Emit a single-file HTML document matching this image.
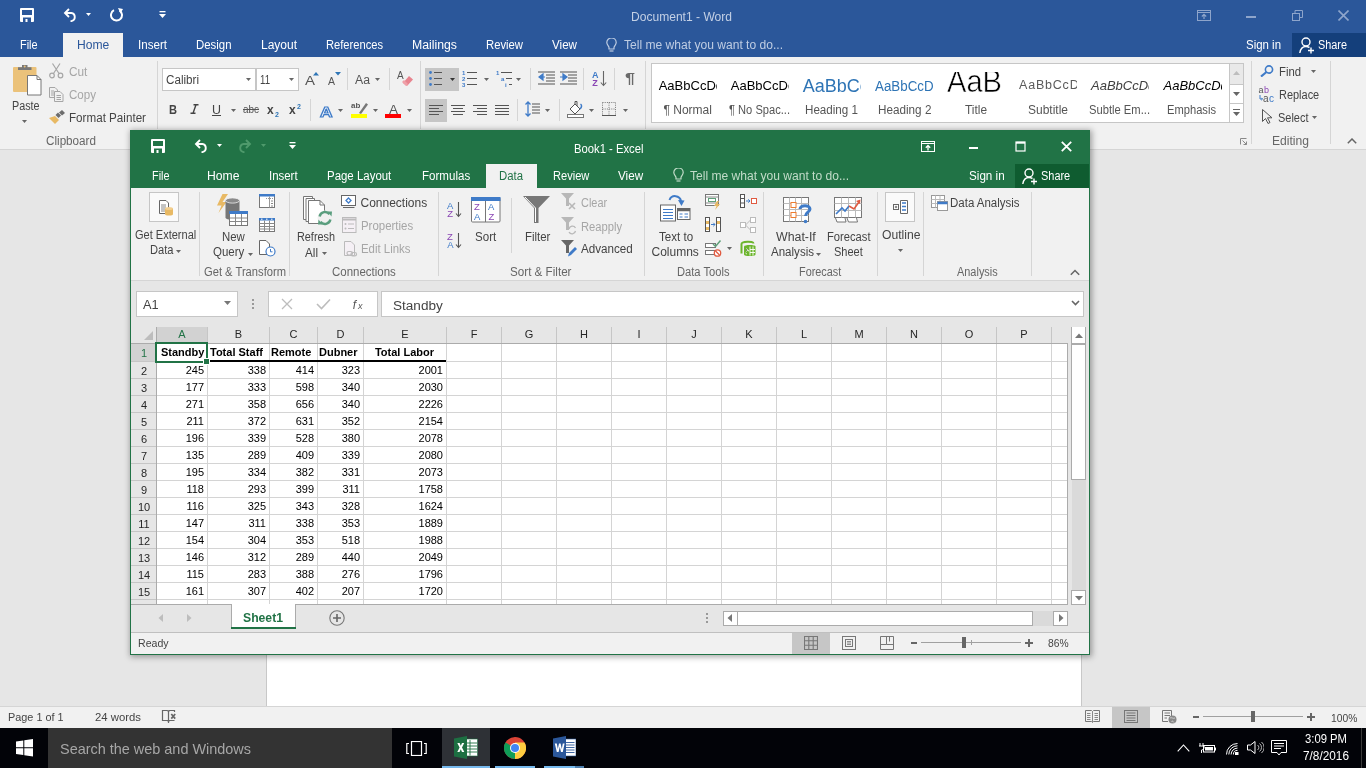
<!DOCTYPE html>
<html><head><meta charset="utf-8"><style>
html,body{margin:0;padding:0;width:1366px;height:768px;overflow:hidden;background:#E6E6E6;}
body{position:relative;font-family:"Liberation Sans",sans-serif;}
.r{position:absolute;display:block;}
.t{position:absolute;white-space:nowrap;line-height:1;transform-origin:0 0;}
</style></head><body>
<div id="w" style="position:absolute;left:0;top:0;width:1366px;height:768px;will-change:transform;">
<div class="r" style="left:0px;top:0px;width:1366px;height:57px;background:#2B579A;"></div>
<div class="r" style="left:0px;top:57px;width:1366px;height:92px;background:#F1F1F1;"></div>
<div class="r" style="left:0px;top:149px;width:1366px;height:1px;background:#D5D5D5;"></div>
<div class="r" style="left:0px;top:150px;width:1366px;height:556px;background:#E6E6E6;"></div>
<div class="r" style="left:266px;top:150px;width:816px;height:556px;background:#FFFFFF;border-left:1px solid #C8C8C8;border-right:1px solid #C8C8C8;box-sizing:border-box;"></div>
<div class="r" style="left:0px;top:706px;width:1366px;height:1px;background:#D5D5D5;"></div>
<div class="r" style="left:0px;top:707px;width:1366px;height:21px;background:#F1F1F1;"></div>
<div class="t" style="left:631.00px;top:11.34px;font-size:12px;color:#C3D0E5;transform:scaleX(1.0051);">Document1 - Word</div>
<div class="r" style="left:63px;top:33px;width:60px;height:24px;background:#F1F1F1;"></div>
<div class="t" style="left:20.40px;top:39.34px;font-size:12px;color:#FFFFFF;transform:scaleX(0.9102);">File</div>
<div class="t" style="left:76.70px;top:39.34px;font-size:12px;color:#2B579A;transform:scaleX(1.0090);">Home</div>
<div class="t" style="left:138.00px;top:39.34px;font-size:12px;color:#FFFFFF;transform:scaleX(0.9663);">Insert</div>
<div class="t" style="left:196.00px;top:39.34px;font-size:12px;color:#FFFFFF;transform:scaleX(0.9503);">Design</div>
<div class="t" style="left:261.00px;top:39.34px;font-size:12px;color:#FFFFFF;">Layout</div>
<div class="t" style="left:326.00px;top:39.34px;font-size:12px;color:#FFFFFF;transform:scaleX(0.9288);">References</div>
<div class="t" style="left:412.00px;top:39.34px;font-size:12px;color:#FFFFFF;transform:scaleX(1.0223);">Mailings</div>
<div class="t" style="left:486.00px;top:39.34px;font-size:12px;color:#FFFFFF;transform:scaleX(0.9404);">Review</div>
<div class="t" style="left:552.00px;top:39.34px;font-size:12px;color:#FFFFFF;transform:scaleX(0.9692);">View</div>
<div class="t" style="left:624.00px;top:39.34px;font-size:12px;color:#BFCDE3;transform:scaleX(1.0058);">Tell me what you want to do...</div>
<div class="t" style="left:1246.00px;top:39.34px;font-size:12px;color:#FFFFFF;transform:scaleX(0.9539);">Sign in</div>
<div class="r" style="left:1292px;top:33px;width:74px;height:24px;background:#143F7B;"></div>
<div class="t" style="left:1318.00px;top:39.34px;font-size:12px;color:#FFFFFF;transform:scaleX(0.9056);">Share</div>
<div class="t" style="left:45.50px;top:135.34px;font-size:12px;color:#666666;transform:scaleX(0.9734);">Clipboard</div>
<div class="t" style="left:1272.00px;top:135.14px;font-size:12px;color:#666666;transform:scaleX(1.0084);">Editing</div>
<div class="r" style="left:157px;top:61px;width:1px;height:68px;background:#D5D5D5;"></div>
<div class="r" style="left:420px;top:61px;width:1px;height:68px;background:#D5D5D5;"></div>
<div class="r" style="left:645px;top:61px;width:1px;height:68px;background:#D5D5D5;"></div>
<div class="r" style="left:1251px;top:61px;width:1px;height:83px;background:#D5D5D5;"></div>
<div class="r" style="left:1330px;top:61px;width:1px;height:83px;background:#D5D5D5;"></div>
<div class="t" style="left:11.60px;top:100.34px;font-size:12px;color:#444444;transform:scaleX(0.8994);">Paste</div>
<div class="t" style="left:68.50px;top:65.94px;font-size:12px;color:#A6A6A6;transform:scaleX(0.9853);">Cut</div>
<div class="t" style="left:68.50px;top:89.14px;font-size:12px;color:#A6A6A6;transform:scaleX(0.9638);">Copy</div>
<div class="t" style="left:68.50px;top:111.84px;font-size:12px;color:#444444;transform:scaleX(0.9702);">Format Painter</div>
<div class="r" style="left:162px;top:68px;width:94px;height:23px;background:#FFFFFF;border:1px solid #C6C6C6;box-sizing:border-box;"></div>
<div class="r" style="left:256px;top:68px;width:43px;height:23px;background:#FFFFFF;border:1px solid #C6C6C6;box-sizing:border-box;"></div>
<div class="t" style="left:165.80px;top:74.34px;font-size:12px;color:#444444;transform:scaleX(0.9703);">Calibri</div>
<div class="t" style="left:259.60px;top:74.34px;font-size:12px;color:#444444;transform:scaleX(0.8027);">11</div>
<div class="r" style="left:425px;top:68px;width:34px;height:23px;background:#C6C6C6;"></div>
<div class="r" style="left:425px;top:99px;width:22px;height:23px;background:#C6C6C6;"></div>
<div class="r" style="left:347px;top:68px;width:1px;height:22px;background:#D5D5D5;"></div>
<div class="r" style="left:389px;top:68px;width:1px;height:22px;background:#D5D5D5;"></div>
<div class="r" style="left:310px;top:99px;width:1px;height:22px;background:#D5D5D5;"></div>
<div class="r" style="left:530px;top:68px;width:1px;height:22px;background:#D5D5D5;"></div>
<div class="r" style="left:517px;top:99px;width:1px;height:22px;background:#D5D5D5;"></div>
<div class="r" style="left:559px;top:99px;width:1px;height:22px;background:#D5D5D5;"></div>
<div class="r" style="left:614px;top:68px;width:1px;height:22px;background:#D5D5D5;"></div>
<div class="r" style="left:583px;top:68px;width:1px;height:22px;background:#D5D5D5;"></div>
<div class="r" style="left:651px;top:63px;width:579px;height:60px;background:#FFFFFF;border:1px solid #C6C6C6;box-sizing:border-box;"></div>
<div class="r" style="left:1229px;top:63px;width:15px;height:60px;background:#FFFFFF;border:1px solid #C6C6C6;box-sizing:border-box;"></div>
<div class="r" style="left:1230px;top:64px;width:13px;height:20px;background:#E9E9E9;"></div>
<div class="r" style="left:1229px;top:84px;width:15px;height:1px;background:#C6C6C6;"></div>
<div class="r" style="left:1229px;top:103px;width:15px;height:1px;background:#C6C6C6;"></div>
<div class="t" style="left:7.60px;top:712.19px;font-size:11px;color:#444444;transform:scaleX(0.9881);">Page 1 of 1</div>
<div class="t" style="left:95.20px;top:712.19px;font-size:11px;color:#444444;transform:scaleX(1.0306);">24 words</div>
<div class="r" style="left:1112px;top:707px;width:38px;height:21px;background:#C6C6C6;"></div>
<div class="t" style="left:1330.50px;top:712.59px;font-size:11px;color:#444444;transform:scaleX(0.9348);">100%</div>
<div class="r" style="left:1203px;top:716px;width:100px;height:1px;background:#A0A0A0;"></div>
<div class="r" style="left:1251px;top:711px;width:4px;height:11px;background:#666666;"></div>
<div class="r" style="left:1193px;top:716px;width:6px;height:2px;background:#666666;"></div>
<div class="r" style="left:1307px;top:716px;width:8px;height:2px;background:#666666;"></div>
<div class="r" style="left:1310px;top:713px;width:2px;height:8px;background:#666666;"></div>
<div class="r" style="left:0px;top:728px;width:1366px;height:40px;background:#020308;"></div>
<div class="r" style="left:48px;top:728px;width:344px;height:40px;background:#333333;"></div>
<div class="t" style="left:60.30px;top:741.20px;font-size:15px;color:#A7A7A7;transform:scaleX(0.9625);">Search the web and Windows</div>
<div class="r" style="left:442px;top:728px;width:48px;height:40px;background:#2E3136;"></div>
<div class="r" style="left:442px;top:766px;width:48px;height:2px;background:#76B9ED;"></div>
<div class="r" style="left:495px;top:766px;width:40px;height:2px;background:#76B9ED;"></div>
<div class="r" style="left:544px;top:766px;width:40px;height:2px;background:#76B9ED;"></div>
<div class="t" style="left:1305.00px;top:733.14px;font-size:12px;color:#FFFFFF;transform:scaleX(0.9398);">3:09 PM</div>
<div class="t" style="left:1303.00px;top:750.34px;font-size:12px;color:#FFFFFF;transform:scaleX(0.9848);">7/8/2016</div>
<div class="r" style="left:1361px;top:728px;width:1px;height:40px;background:#3A3A3A;"></div>
<div class="r" style="left:130px;top:130px;width:960px;height:525px;box-shadow:1px 1px 6px 1px rgba(0,0,0,0.34);"></div>
<div class="r" style="left:130px;top:130px;width:960px;height:525px;background:#217346;"></div>
<div class="r" style="left:131px;top:188px;width:958px;height:92px;background:#F1F1F1;"></div>
<div class="r" style="left:131px;top:280px;width:958px;height:1px;background:#D5D5D5;"></div>
<div class="r" style="left:131px;top:281px;width:958px;height:46px;background:#E6E6E6;"></div>
<div class="t" style="left:574.30px;top:143.34px;font-size:12px;color:#FFFFFF;transform:scaleX(0.9374);">Book1 - Excel</div>
<div class="r" style="left:486px;top:164px;width:51px;height:24px;background:#F1F1F1;"></div>
<div class="t" style="left:151.70px;top:169.84px;font-size:12px;color:#FFFFFF;transform:scaleX(0.9050);">File</div>
<div class="t" style="left:207.30px;top:169.84px;font-size:12px;color:#FFFFFF;transform:scaleX(1.0153);">Home</div>
<div class="t" style="left:269.00px;top:169.84px;font-size:12px;color:#FFFFFF;transform:scaleX(0.9529);">Insert</div>
<div class="t" style="left:327.40px;top:169.84px;font-size:12px;color:#FFFFFF;transform:scaleX(0.9541);">Page Layout</div>
<div class="t" style="left:421.50px;top:169.84px;font-size:12px;color:#FFFFFF;transform:scaleX(0.9638);">Formulas</div>
<div class="t" style="left:499.00px;top:169.84px;font-size:12px;color:#217346;transform:scaleX(0.9468);">Data</div>
<div class="t" style="left:552.50px;top:169.84px;font-size:12px;color:#FFFFFF;transform:scaleX(0.9226);">Review</div>
<div class="t" style="left:617.80px;top:169.84px;font-size:12px;color:#FFFFFF;transform:scaleX(0.9731);">View</div>
<div class="t" style="left:689.60px;top:169.84px;font-size:12px;color:#C2DCC9;transform:scaleX(1.0058);">Tell me what you want to do...</div>
<div class="t" style="left:969.00px;top:169.84px;font-size:12px;color:#FFFFFF;transform:scaleX(0.9729);">Sign in</div>
<div class="r" style="left:1015px;top:164px;width:74px;height:24px;background:#0F5C30;"></div>
<div class="t" style="left:1040.80px;top:169.84px;font-size:12px;color:#FFFFFF;transform:scaleX(0.9118);">Share</div>
<div class="t" style="left:134.60px;top:228.74px;font-size:12px;color:#444444;transform:scaleX(0.9176);">Get External</div>
<div class="t" style="left:149.50px;top:244.34px;font-size:12px;color:#444444;transform:scaleX(0.9271);">Data</div>
<div class="t" style="left:221.80px;top:230.64px;font-size:12px;color:#444444;transform:scaleX(0.9497);">New</div>
<div class="t" style="left:213.30px;top:246.34px;font-size:12px;color:#444444;transform:scaleX(0.9578);">Query</div>
<div class="t" style="left:296.50px;top:230.64px;font-size:12px;color:#444444;transform:scaleX(0.9044);">Refresh</div>
<div class="t" style="left:305.00px;top:246.74px;font-size:12px;color:#444444;transform:scaleX(0.9747);">All</div>
<div class="t" style="left:360.50px;top:196.84px;font-size:12px;color:#444444;">Connections</div>
<div class="t" style="left:360.50px;top:219.64px;font-size:12px;color:#A6A6A6;transform:scaleX(0.9526);">Properties</div>
<div class="t" style="left:360.50px;top:243.04px;font-size:12px;color:#A6A6A6;transform:scaleX(0.9514);">Edit Links</div>
<div class="t" style="left:474.80px;top:231.04px;font-size:12px;color:#444444;transform:scaleX(0.9633);">Sort</div>
<div class="t" style="left:524.60px;top:231.04px;font-size:12px;color:#444444;transform:scaleX(0.9525);">Filter</div>
<div class="t" style="left:580.60px;top:197.34px;font-size:12px;color:#A6A6A6;transform:scaleX(0.9101);">Clear</div>
<div class="t" style="left:580.60px;top:220.64px;font-size:12px;color:#A6A6A6;transform:scaleX(0.9335);">Reapply</div>
<div class="t" style="left:580.60px;top:243.04px;font-size:12px;color:#444444;transform:scaleX(0.9705);">Advanced</div>
<div class="t" style="left:658.50px;top:231.04px;font-size:12px;color:#444444;transform:scaleX(0.9647);">Text to</div>
<div class="t" style="left:651.50px;top:246.34px;font-size:12px;color:#444444;">Columns</div>
<div class="t" style="left:776.20px;top:231.04px;font-size:12px;color:#444444;transform:scaleX(1.0292);">What-If</div>
<div class="t" style="left:770.50px;top:246.34px;font-size:12px;color:#444444;transform:scaleX(0.9623);">Analysis</div>
<div class="t" style="left:826.50px;top:231.04px;font-size:12px;color:#444444;transform:scaleX(0.9318);">Forecast</div>
<div class="t" style="left:834.00px;top:246.34px;font-size:12px;color:#444444;transform:scaleX(0.9184);">Sheet</div>
<div class="t" style="left:881.50px;top:229.34px;font-size:12px;color:#444444;transform:scaleX(1.0126);">Outline</div>
<div class="t" style="left:950.40px;top:197.34px;font-size:12px;color:#444444;transform:scaleX(0.9573);">Data Analysis</div>
<div class="t" style="left:203.60px;top:265.84px;font-size:12px;color:#666666;transform:scaleX(0.9315);">Get &amp; Transform</div>
<div class="t" style="left:331.60px;top:265.84px;font-size:12px;color:#666666;transform:scaleX(0.9564);">Connections</div>
<div class="t" style="left:510.40px;top:265.84px;font-size:12px;color:#666666;transform:scaleX(0.9708);">Sort &amp; Filter</div>
<div class="t" style="left:677.00px;top:265.84px;font-size:12px;color:#666666;transform:scaleX(0.9295);">Data Tools</div>
<div class="t" style="left:799.30px;top:265.84px;font-size:12px;color:#666666;transform:scaleX(0.9061);">Forecast</div>
<div class="t" style="left:957.00px;top:265.84px;font-size:12px;color:#666666;transform:scaleX(0.9108);">Analysis</div>
<div class="r" style="left:199px;top:192px;width:1px;height:84px;background:#D5D5D5;"></div>
<div class="r" style="left:289px;top:192px;width:1px;height:84px;background:#D5D5D5;"></div>
<div class="r" style="left:438px;top:192px;width:1px;height:84px;background:#D5D5D5;"></div>
<div class="r" style="left:644px;top:192px;width:1px;height:84px;background:#D5D5D5;"></div>
<div class="r" style="left:763px;top:192px;width:1px;height:84px;background:#D5D5D5;"></div>
<div class="r" style="left:877px;top:192px;width:1px;height:84px;background:#D5D5D5;"></div>
<div class="r" style="left:923px;top:192px;width:1px;height:84px;background:#D5D5D5;"></div>
<div class="r" style="left:1031px;top:192px;width:1px;height:84px;background:#D5D5D5;"></div>
<div class="r" style="left:511px;top:198px;width:1px;height:55px;background:#D5D5D5;"></div>
<div class="r" style="left:136px;top:291px;width:102px;height:26px;background:#FFFFFF;border:1px solid #C6C6C6;box-sizing:border-box;"></div>
<div class="t" style="left:143.00px;top:298.94px;font-size:12px;color:#444444;transform:scaleX(1.0628);">A1</div>
<div class="r" style="left:268px;top:291px;width:110px;height:26px;background:#FFFFFF;border:1px solid #C6C6C6;box-sizing:border-box;"></div>
<div class="r" style="left:381px;top:291px;width:703px;height:26px;background:#FFFFFF;border:1px solid #C6C6C6;box-sizing:border-box;"></div>
<div class="t" style="left:392.50px;top:300.34px;font-size:12px;color:#444444;transform:scaleX(1.1309);">Standby</div>
<div class="r" style="left:131px;top:327px;width:937px;height:17px;background:#E6E6E6;"></div>
<div class="r" style="left:131px;top:344px;width:26px;height:260px;background:#E6E6E6;"></div>
<div class="r" style="left:156px;top:327px;width:51px;height:17px;background:#D2D2D2;"></div>
<div class="r" style="left:131px;top:344px;width:25px;height:17px;background:#D2D2D2;"></div>
<div class="r" style="left:157px;top:344px;width:910px;height:260px;background:#FFFFFF;"></div>
<div class="r" style="left:207px;top:344px;width:1px;height:260px;background:#D4D4D4;"></div>
<div class="r" style="left:207px;top:327px;width:1px;height:17px;background:#C6C6C6;"></div>
<div class="r" style="left:269px;top:344px;width:1px;height:260px;background:#D4D4D4;"></div>
<div class="r" style="left:269px;top:327px;width:1px;height:17px;background:#C6C6C6;"></div>
<div class="r" style="left:317px;top:344px;width:1px;height:260px;background:#D4D4D4;"></div>
<div class="r" style="left:317px;top:327px;width:1px;height:17px;background:#C6C6C6;"></div>
<div class="r" style="left:363px;top:344px;width:1px;height:260px;background:#D4D4D4;"></div>
<div class="r" style="left:363px;top:327px;width:1px;height:17px;background:#C6C6C6;"></div>
<div class="r" style="left:446px;top:344px;width:1px;height:260px;background:#D4D4D4;"></div>
<div class="r" style="left:446px;top:327px;width:1px;height:17px;background:#C6C6C6;"></div>
<div class="r" style="left:501px;top:344px;width:1px;height:260px;background:#D4D4D4;"></div>
<div class="r" style="left:501px;top:327px;width:1px;height:17px;background:#C6C6C6;"></div>
<div class="r" style="left:556px;top:344px;width:1px;height:260px;background:#D4D4D4;"></div>
<div class="r" style="left:556px;top:327px;width:1px;height:17px;background:#C6C6C6;"></div>
<div class="r" style="left:611px;top:344px;width:1px;height:260px;background:#D4D4D4;"></div>
<div class="r" style="left:611px;top:327px;width:1px;height:17px;background:#C6C6C6;"></div>
<div class="r" style="left:666px;top:344px;width:1px;height:260px;background:#D4D4D4;"></div>
<div class="r" style="left:666px;top:327px;width:1px;height:17px;background:#C6C6C6;"></div>
<div class="r" style="left:721px;top:344px;width:1px;height:260px;background:#D4D4D4;"></div>
<div class="r" style="left:721px;top:327px;width:1px;height:17px;background:#C6C6C6;"></div>
<div class="r" style="left:776px;top:344px;width:1px;height:260px;background:#D4D4D4;"></div>
<div class="r" style="left:776px;top:327px;width:1px;height:17px;background:#C6C6C6;"></div>
<div class="r" style="left:831px;top:344px;width:1px;height:260px;background:#D4D4D4;"></div>
<div class="r" style="left:831px;top:327px;width:1px;height:17px;background:#C6C6C6;"></div>
<div class="r" style="left:886px;top:344px;width:1px;height:260px;background:#D4D4D4;"></div>
<div class="r" style="left:886px;top:327px;width:1px;height:17px;background:#C6C6C6;"></div>
<div class="r" style="left:941px;top:344px;width:1px;height:260px;background:#D4D4D4;"></div>
<div class="r" style="left:941px;top:327px;width:1px;height:17px;background:#C6C6C6;"></div>
<div class="r" style="left:996px;top:344px;width:1px;height:260px;background:#D4D4D4;"></div>
<div class="r" style="left:996px;top:327px;width:1px;height:17px;background:#C6C6C6;"></div>
<div class="r" style="left:1051px;top:344px;width:1px;height:260px;background:#D4D4D4;"></div>
<div class="r" style="left:1051px;top:327px;width:1px;height:17px;background:#C6C6C6;"></div>
<div class="r" style="left:156px;top:327px;width:1px;height:277px;background:#ABABAB;"></div>
<div class="r" style="left:131px;top:343px;width:936px;height:1px;background:#ABABAB;"></div>
<div class="r" style="left:157px;top:361px;width:910px;height:1px;background:#D4D4D4;"></div>
<div class="r" style="left:131px;top:361px;width:25px;height:1px;background:#C6C6C6;"></div>
<div class="r" style="left:157px;top:378px;width:910px;height:1px;background:#D4D4D4;"></div>
<div class="r" style="left:131px;top:378px;width:25px;height:1px;background:#C6C6C6;"></div>
<div class="r" style="left:157px;top:395px;width:910px;height:1px;background:#D4D4D4;"></div>
<div class="r" style="left:131px;top:395px;width:25px;height:1px;background:#C6C6C6;"></div>
<div class="r" style="left:157px;top:412px;width:910px;height:1px;background:#D4D4D4;"></div>
<div class="r" style="left:131px;top:412px;width:25px;height:1px;background:#C6C6C6;"></div>
<div class="r" style="left:157px;top:429px;width:910px;height:1px;background:#D4D4D4;"></div>
<div class="r" style="left:131px;top:429px;width:25px;height:1px;background:#C6C6C6;"></div>
<div class="r" style="left:157px;top:446px;width:910px;height:1px;background:#D4D4D4;"></div>
<div class="r" style="left:131px;top:446px;width:25px;height:1px;background:#C6C6C6;"></div>
<div class="r" style="left:157px;top:463px;width:910px;height:1px;background:#D4D4D4;"></div>
<div class="r" style="left:131px;top:463px;width:25px;height:1px;background:#C6C6C6;"></div>
<div class="r" style="left:157px;top:480px;width:910px;height:1px;background:#D4D4D4;"></div>
<div class="r" style="left:131px;top:480px;width:25px;height:1px;background:#C6C6C6;"></div>
<div class="r" style="left:157px;top:497px;width:910px;height:1px;background:#D4D4D4;"></div>
<div class="r" style="left:131px;top:497px;width:25px;height:1px;background:#C6C6C6;"></div>
<div class="r" style="left:157px;top:514px;width:910px;height:1px;background:#D4D4D4;"></div>
<div class="r" style="left:131px;top:514px;width:25px;height:1px;background:#C6C6C6;"></div>
<div class="r" style="left:157px;top:531px;width:910px;height:1px;background:#D4D4D4;"></div>
<div class="r" style="left:131px;top:531px;width:25px;height:1px;background:#C6C6C6;"></div>
<div class="r" style="left:157px;top:548px;width:910px;height:1px;background:#D4D4D4;"></div>
<div class="r" style="left:131px;top:548px;width:25px;height:1px;background:#C6C6C6;"></div>
<div class="r" style="left:157px;top:565px;width:910px;height:1px;background:#D4D4D4;"></div>
<div class="r" style="left:131px;top:565px;width:25px;height:1px;background:#C6C6C6;"></div>
<div class="r" style="left:157px;top:582px;width:910px;height:1px;background:#D4D4D4;"></div>
<div class="r" style="left:131px;top:582px;width:25px;height:1px;background:#C6C6C6;"></div>
<div class="r" style="left:157px;top:599px;width:910px;height:1px;background:#D4D4D4;"></div>
<div class="r" style="left:131px;top:599px;width:25px;height:1px;background:#C6C6C6;"></div>
<div class="r" style="left:1067px;top:343px;width:1px;height:261px;background:#ABABAB;"></div>
<div class="t" style="left:178.33px;top:329.19px;font-size:11px;color:#217346;">A</div>
<div class="t" style="left:234.83px;top:329.19px;font-size:11px;color:#262626;">B</div>
<div class="t" style="left:289.53px;top:329.19px;font-size:11px;color:#262626;">C</div>
<div class="t" style="left:336.53px;top:329.19px;font-size:11px;color:#262626;">D</div>
<div class="t" style="left:401.33px;top:329.19px;font-size:11px;color:#262626;">E</div>
<div class="t" style="left:470.64px;top:329.19px;font-size:11px;color:#262626;">F</div>
<div class="t" style="left:524.72px;top:329.19px;font-size:11px;color:#262626;">G</div>
<div class="t" style="left:580.03px;top:329.19px;font-size:11px;color:#262626;">H</div>
<div class="t" style="left:637.47px;top:329.19px;font-size:11px;color:#262626;">I</div>
<div class="t" style="left:691.25px;top:329.19px;font-size:11px;color:#262626;">J</div>
<div class="t" style="left:745.33px;top:329.19px;font-size:11px;color:#262626;">K</div>
<div class="t" style="left:800.94px;top:329.19px;font-size:11px;color:#262626;">L</div>
<div class="t" style="left:854.42px;top:329.19px;font-size:11px;color:#262626;">M</div>
<div class="t" style="left:910.03px;top:329.19px;font-size:11px;color:#262626;">N</div>
<div class="t" style="left:964.72px;top:329.19px;font-size:11px;color:#262626;">O</div>
<div class="t" style="left:1020.33px;top:329.19px;font-size:11px;color:#262626;">P</div>
<div class="t" style="left:140.94px;top:348.19px;font-size:11px;color:#217346;">1</div>
<div class="t" style="left:140.94px;top:365.69px;font-size:11px;color:#262626;">2</div>
<div class="t" style="left:140.94px;top:382.69px;font-size:11px;color:#262626;">3</div>
<div class="t" style="left:140.94px;top:399.69px;font-size:11px;color:#262626;">4</div>
<div class="t" style="left:140.94px;top:416.69px;font-size:11px;color:#262626;">5</div>
<div class="t" style="left:140.94px;top:433.69px;font-size:11px;color:#262626;">6</div>
<div class="t" style="left:140.94px;top:450.69px;font-size:11px;color:#262626;">7</div>
<div class="t" style="left:140.94px;top:467.69px;font-size:11px;color:#262626;">8</div>
<div class="t" style="left:140.94px;top:484.69px;font-size:11px;color:#262626;">9</div>
<div class="t" style="left:137.88px;top:501.69px;font-size:11px;color:#262626;">10</div>
<div class="t" style="left:138.29px;top:518.69px;font-size:11px;color:#262626;">11</div>
<div class="t" style="left:137.88px;top:535.69px;font-size:11px;color:#262626;">12</div>
<div class="t" style="left:137.88px;top:552.69px;font-size:11px;color:#262626;">13</div>
<div class="t" style="left:137.88px;top:569.69px;font-size:11px;color:#262626;">14</div>
<div class="t" style="left:137.88px;top:586.69px;font-size:11px;color:#262626;">15</div>
<div class="t" style="left:161.00px;top:347.19px;font-size:11px;color:#000000;font-weight:bold;">Standby</div>
<div class="t" style="left:210.00px;top:347.19px;font-size:11px;color:#000000;font-weight:bold;">Total Staff</div>
<div class="t" style="left:271.00px;top:347.19px;font-size:11px;color:#000000;font-weight:bold;">Remote</div>
<div class="t" style="left:319.00px;top:347.19px;font-size:11px;color:#000000;font-weight:bold;">Dubner</div>
<div class="t" style="left:374.96px;top:347.19px;font-size:11px;color:#000000;font-weight:bold;">Total Labor</div>
<div class="t" style="left:185.65px;top:365.19px;font-size:11px;color:#000000;">245</div>
<div class="t" style="left:247.65px;top:365.19px;font-size:11px;color:#000000;">338</div>
<div class="t" style="left:295.65px;top:365.19px;font-size:11px;color:#000000;">414</div>
<div class="t" style="left:341.65px;top:365.19px;font-size:11px;color:#000000;">323</div>
<div class="t" style="left:418.53px;top:365.19px;font-size:11px;color:#000000;">2001</div>
<div class="t" style="left:185.65px;top:382.19px;font-size:11px;color:#000000;">177</div>
<div class="t" style="left:247.65px;top:382.19px;font-size:11px;color:#000000;">333</div>
<div class="t" style="left:295.65px;top:382.19px;font-size:11px;color:#000000;">598</div>
<div class="t" style="left:341.65px;top:382.19px;font-size:11px;color:#000000;">340</div>
<div class="t" style="left:418.53px;top:382.19px;font-size:11px;color:#000000;">2030</div>
<div class="t" style="left:185.65px;top:399.19px;font-size:11px;color:#000000;">271</div>
<div class="t" style="left:247.65px;top:399.19px;font-size:11px;color:#000000;">358</div>
<div class="t" style="left:295.65px;top:399.19px;font-size:11px;color:#000000;">656</div>
<div class="t" style="left:341.65px;top:399.19px;font-size:11px;color:#000000;">340</div>
<div class="t" style="left:418.53px;top:399.19px;font-size:11px;color:#000000;">2226</div>
<div class="t" style="left:186.46px;top:416.19px;font-size:11px;color:#000000;">211</div>
<div class="t" style="left:247.65px;top:416.19px;font-size:11px;color:#000000;">372</div>
<div class="t" style="left:295.65px;top:416.19px;font-size:11px;color:#000000;">631</div>
<div class="t" style="left:341.65px;top:416.19px;font-size:11px;color:#000000;">352</div>
<div class="t" style="left:418.53px;top:416.19px;font-size:11px;color:#000000;">2154</div>
<div class="t" style="left:185.65px;top:433.19px;font-size:11px;color:#000000;">196</div>
<div class="t" style="left:247.65px;top:433.19px;font-size:11px;color:#000000;">339</div>
<div class="t" style="left:295.65px;top:433.19px;font-size:11px;color:#000000;">528</div>
<div class="t" style="left:341.65px;top:433.19px;font-size:11px;color:#000000;">380</div>
<div class="t" style="left:418.53px;top:433.19px;font-size:11px;color:#000000;">2078</div>
<div class="t" style="left:185.65px;top:450.19px;font-size:11px;color:#000000;">135</div>
<div class="t" style="left:247.65px;top:450.19px;font-size:11px;color:#000000;">289</div>
<div class="t" style="left:295.65px;top:450.19px;font-size:11px;color:#000000;">409</div>
<div class="t" style="left:341.65px;top:450.19px;font-size:11px;color:#000000;">339</div>
<div class="t" style="left:418.53px;top:450.19px;font-size:11px;color:#000000;">2080</div>
<div class="t" style="left:185.65px;top:467.19px;font-size:11px;color:#000000;">195</div>
<div class="t" style="left:247.65px;top:467.19px;font-size:11px;color:#000000;">334</div>
<div class="t" style="left:295.65px;top:467.19px;font-size:11px;color:#000000;">382</div>
<div class="t" style="left:341.65px;top:467.19px;font-size:11px;color:#000000;">331</div>
<div class="t" style="left:418.53px;top:467.19px;font-size:11px;color:#000000;">2073</div>
<div class="t" style="left:186.46px;top:484.19px;font-size:11px;color:#000000;">118</div>
<div class="t" style="left:247.65px;top:484.19px;font-size:11px;color:#000000;">293</div>
<div class="t" style="left:295.65px;top:484.19px;font-size:11px;color:#000000;">399</div>
<div class="t" style="left:342.46px;top:484.19px;font-size:11px;color:#000000;">311</div>
<div class="t" style="left:418.53px;top:484.19px;font-size:11px;color:#000000;">1758</div>
<div class="t" style="left:186.46px;top:501.19px;font-size:11px;color:#000000;">116</div>
<div class="t" style="left:247.65px;top:501.19px;font-size:11px;color:#000000;">325</div>
<div class="t" style="left:295.65px;top:501.19px;font-size:11px;color:#000000;">343</div>
<div class="t" style="left:341.65px;top:501.19px;font-size:11px;color:#000000;">328</div>
<div class="t" style="left:418.53px;top:501.19px;font-size:11px;color:#000000;">1624</div>
<div class="t" style="left:185.65px;top:518.19px;font-size:11px;color:#000000;">147</div>
<div class="t" style="left:248.46px;top:518.19px;font-size:11px;color:#000000;">311</div>
<div class="t" style="left:295.65px;top:518.19px;font-size:11px;color:#000000;">338</div>
<div class="t" style="left:341.65px;top:518.19px;font-size:11px;color:#000000;">353</div>
<div class="t" style="left:418.53px;top:518.19px;font-size:11px;color:#000000;">1889</div>
<div class="t" style="left:185.65px;top:535.19px;font-size:11px;color:#000000;">154</div>
<div class="t" style="left:247.65px;top:535.19px;font-size:11px;color:#000000;">304</div>
<div class="t" style="left:295.65px;top:535.19px;font-size:11px;color:#000000;">353</div>
<div class="t" style="left:341.65px;top:535.19px;font-size:11px;color:#000000;">518</div>
<div class="t" style="left:418.53px;top:535.19px;font-size:11px;color:#000000;">1988</div>
<div class="t" style="left:185.65px;top:552.19px;font-size:11px;color:#000000;">146</div>
<div class="t" style="left:247.65px;top:552.19px;font-size:11px;color:#000000;">312</div>
<div class="t" style="left:295.65px;top:552.19px;font-size:11px;color:#000000;">289</div>
<div class="t" style="left:341.65px;top:552.19px;font-size:11px;color:#000000;">440</div>
<div class="t" style="left:418.53px;top:552.19px;font-size:11px;color:#000000;">2049</div>
<div class="t" style="left:186.46px;top:569.19px;font-size:11px;color:#000000;">115</div>
<div class="t" style="left:247.65px;top:569.19px;font-size:11px;color:#000000;">283</div>
<div class="t" style="left:295.65px;top:569.19px;font-size:11px;color:#000000;">388</div>
<div class="t" style="left:341.65px;top:569.19px;font-size:11px;color:#000000;">276</div>
<div class="t" style="left:418.53px;top:569.19px;font-size:11px;color:#000000;">1796</div>
<div class="t" style="left:185.65px;top:586.19px;font-size:11px;color:#000000;">161</div>
<div class="t" style="left:247.65px;top:586.19px;font-size:11px;color:#000000;">307</div>
<div class="t" style="left:295.65px;top:586.19px;font-size:11px;color:#000000;">402</div>
<div class="t" style="left:341.65px;top:586.19px;font-size:11px;color:#000000;">207</div>
<div class="t" style="left:418.53px;top:586.19px;font-size:11px;color:#000000;">1720</div>
<div class="r" style="left:207px;top:360px;width:239px;height:2px;background:#000000;"></div>
<div class="r" style="left:155px;top:342px;width:53px;height:21px;background:transparent;border:2px solid #217346;box-sizing:border-box;"></div>
<div class="r" style="left:204px;top:359px;width:5px;height:5px;background:#217346;outline:1px solid #fff;"></div>
<div class="r" style="left:1068px;top:327px;width:21px;height:277px;background:#E6E6E6;"></div>
<div class="r" style="left:1071px;top:327px;width:15px;height:17px;background:#FFFFFF;border:1px solid #ABABAB;border-top:none;box-sizing:border-box;"></div>
<div class="r" style="left:1071px;top:344px;width:15px;height:136px;background:#FFFFFF;border:1px solid #ABABAB;box-sizing:border-box;"></div>
<div class="r" style="left:1072px;top:480px;width:14px;height:110px;background:#DADADA;"></div>
<div class="r" style="left:1071px;top:590px;width:15px;height:15px;background:#FFFFFF;border:1px solid #ABABAB;box-sizing:border-box;"></div>
<div class="r" style="left:131px;top:604px;width:958px;height:28px;background:#E6E6E6;"></div>
<div class="r" style="left:1071px;top:590px;width:15px;height:15px;background:#FFFFFF;border:1px solid #ABABAB;box-sizing:border-box;"></div>
<div class="r" style="left:131px;top:604px;width:937px;height:1px;background:#ABABAB;"></div>
<div class="r" style="left:131px;top:632px;width:958px;height:1px;background:#C0C0C0;"></div>
<div class="r" style="left:231px;top:604px;width:65px;height:25px;background:#FFFFFF;border-left:1px solid #ABABAB;border-right:1px solid #ABABAB;box-sizing:border-box;"></div>
<div class="r" style="left:231px;top:627px;width:65px;height:2px;background:#217346;"></div>
<div class="t" style="left:243.40px;top:612.34px;font-size:12px;color:#217346;font-weight:bold;transform:scaleX(1.0164);">Sheet1</div>
<div class="r" style="left:723px;top:611px;width:15px;height:15px;background:#FFFFFF;border:1px solid #ABABAB;box-sizing:border-box;"></div>
<div class="r" style="left:737px;top:611px;width:296px;height:15px;background:#FFFFFF;border:1px solid #ABABAB;box-sizing:border-box;"></div>
<div class="r" style="left:1033px;top:611px;width:20px;height:15px;background:#DADADA;"></div>
<div class="r" style="left:1053px;top:611px;width:15px;height:15px;background:#FFFFFF;border:1px solid #ABABAB;box-sizing:border-box;"></div>
<div class="r" style="left:131px;top:633px;width:958px;height:21px;background:#F1F1F1;"></div>
<div class="t" style="left:138.40px;top:637.79px;font-size:11px;color:#444444;transform:scaleX(0.9623);">Ready</div>
<div class="r" style="left:792px;top:633px;width:38px;height:21px;background:#C6C6C6;"></div>
<div class="r" style="left:921px;top:642px;width:100px;height:1px;background:#A0A0A0;"></div>
<div class="r" style="left:962px;top:637px;width:4px;height:11px;background:#666666;"></div>
<div class="r" style="left:911px;top:642px;width:6px;height:2px;background:#666666;"></div>
<div class="r" style="left:1025px;top:642px;width:8px;height:2px;background:#666666;"></div>
<div class="r" style="left:1028px;top:639px;width:2px;height:8px;background:#666666;"></div>
<div class="t" style="left:1048.00px;top:638.39px;font-size:11px;color:#444444;transform:scaleX(0.9357);">86%</div>
<svg class="r" style="left:20px;top:8px;" width="14" height="14" viewBox="0 0 14 14"><rect x="0" y="0" width="14" height="14" rx="1" fill="#FFFFFF"/><rect x="2" y="2" width="10" height="5" fill="#2B579A"/><rect x="3" y="9.5" width="8" height="4.5" fill="#2B579A"/><rect x="5.5" y="11" width="2" height="3" fill="#FFFFFF"/></svg>
<svg class="r" style="left:63px;top:8px;" width="15" height="14" viewBox="0 0 15 14"><g fill="none" stroke="#FFFFFF" stroke-width="1.9" opacity="1"><path d="M2.5 5 H8.3 A4.1 4.1 0 0 1 8.3 13.1 H7.5"/><path d="M6 1 L2 5 L6 9"/></g></svg>
<svg class="r" style="left:86px;top:13px;" width="5" height="3" viewBox="0 0 5 3"><path d="M0 0 H5 L2.5 3 Z" fill="#FFFFFF"/></svg>
<svg class="r" style="left:110px;top:8px;" width="14" height="14" viewBox="0 0 14 14"><g fill="none" stroke="#fff" stroke-width="2"><path d="M9.5 2.5 A5.5 5.5 0 1 1 4 2.2"/></g><path d="M8 0 L13 1 L10.5 5.5 Z" fill="#fff"/></svg>
<svg class="r" style="left:159px;top:11px;" width="7" height="8" viewBox="0 0 7 8"><rect x="0.5" y="0" width="6" height="1.3" fill="#FFFFFF"/><path d="M0 3 H7 L3.5 7 Z" fill="#FFFFFF"/></svg>
<svg class="r" style="left:1197px;top:10px;" width="15" height="11" viewBox="0 0 15 11"><rect x="0.5" y="0.5" width="13" height="10" fill="none" stroke="#8EA5CB"/><path d="M1 2.5H13" stroke="#8EA5CB"/><path d="M7 9V4.5 M4.8 6.5 L7 4.3 L9.2 6.5" fill="none" stroke="#8EA5CB" stroke-width="1.2"/></svg>
<div class="r" style="left:1246px;top:16px;width:10px;height:1.5px;background:#8EA5CB;"></div>
<svg class="r" style="left:1292px;top:10px;" width="11" height="11" viewBox="0 0 11 11"><g fill="none" stroke="#8EA5CB"><rect x="0.5" y="3.5" width="7" height="7"/><path d="M3 3.5V0.5H10.5V7.5H7.5"/></g></svg>
<svg class="r" style="left:1338px;top:10px;" width="11" height="11" viewBox="0 0 11 11"><path d="M0.5 0.5L10.5 10.5M10.5 0.5L0.5 10.5" stroke="#8EA5CB" stroke-width="1.6"/></svg>
<svg class="r" style="left:606px;top:38px;" width="11" height="15" viewBox="0 0 11 15"><g fill="none" stroke="#BFCDE3" stroke-width="1.2"><path d="M3 11 V9.5 C3 8 0.8 6.8 0.8 4.6 A4.7 4.7 0 0 1 10.2 4.6 C10.2 6.8 8 8 8 9.5 V11 Z"/><path d="M3.5 13 H7.5"/></g></svg>
<svg class="r" style="left:1299px;top:37px;" width="16" height="17" viewBox="0 0 16 17"><g fill="none" stroke="#FFFFFF" stroke-width="1.4"><circle cx="7" cy="5" r="4"/><path d="M0.8 16 C1.5 11.5 4 9.5 7 9.5 C8.5 9.5 9.5 10 10.5 10.5"/><path d="M12 10.5 V16.5 M9 13.5 H15"/></g></svg>
<svg class="r" style="left:12px;top:64px;" width="30" height="32" viewBox="0 0 30 32"><rect x="1" y="3" width="23.5" height="25" rx="1" fill="#EBC27A"/><path d="M6 6 V3.2 H10 V1 H15.5 V3.2 H19.5 V6 Z" fill="#777"/><circle cx="12.7" cy="2.6" r="1" fill="#EBC27A"/><path d="M15.5 11.5 H25 L29 15.5 V31 H15.5 Z" fill="#fff" stroke="#777" stroke-width="1"/><path d="M25 11.5 V15.5 H29" fill="none" stroke="#777"/></svg>
<svg class="r" style="left:22px;top:120px;" width="5" height="3" viewBox="0 0 5 3"><path d="M0 0 H5 L2.5 3 Z" fill="#666"/></svg>
<svg class="r" style="left:49px;top:63px;" width="15" height="16" viewBox="0 0 15 16"><g fill="none" stroke="#A6A6A6" stroke-width="1.2"><circle cx="3" cy="12.5" r="2.3"/><circle cx="11.5" cy="12.5" r="2.3"/><path d="M4.5 10.5 L11 0.5 M10 10.5 L3.5 0.5"/></g></svg>
<svg class="r" style="left:49px;top:87px;" width="15" height="15" viewBox="0 0 15 15"><g fill="#F1F1F1" stroke="#A6A6A6" stroke-width="1"><path d="M0.5 0.5 H6 L8.5 3 V10.5 H0.5 Z"/><path d="M5.5 4.5 H11 L14 7.5 V14.5 H5.5 Z"/></g><g stroke="#A6A6A6"><path d="M2 4H5 M2 6H5 M2 8H5 M7.5 8.5H12 M7.5 10.5H12 M7.5 12.5H12"/></g></svg>
<svg class="r" style="left:49px;top:110px;" width="17" height="14" viewBox="0 0 17 14"><path d="M0 8 L6 6 L10 10 L6 14 Z" fill="#E8B964"/><path d="M6.5 5 L9 2.5 L12 5.5 L9.5 8 Z" fill="#6d6d6d"/><path d="M10 2.5 L13 0 L16 3 L13 5.5 Z" fill="#6d6d6d"/></svg>
<svg class="r" style="left:246px;top:78px;" width="5" height="3" viewBox="0 0 5 3"><path d="M0 0 H5 L2.5 3 Z" fill="#666"/></svg>
<svg class="r" style="left:289px;top:78px;" width="5" height="3" viewBox="0 0 5 3"><path d="M0 0 H5 L2.5 3 Z" fill="#666"/></svg>
<div class="t" style="left:168.50px;top:103.84px;font-size:12px;color:#444;font-weight:bold;transform:scaleX(0.9231);">B</div>
<svg class="r" style="left:190px;top:104px;" width="9" height="10" viewBox="0 0 9 10"><path d="M3.5 0.8 H8.5 M0.5 9.2 H5.5 M6 0.8 L3 9.2" stroke="#444" stroke-width="1.4" fill="none"/></svg>
<div class="t" style="left:212.00px;top:103.84px;font-size:12px;color:#444;transform:scaleX(1.0385);">U</div>
<div class="r" style="left:212px;top:115px;width:9px;height:1px;background:#444;"></div>
<svg class="r" style="left:231px;top:109px;" width="5" height="3" viewBox="0 0 5 3"><path d="M0 0 H5 L2.5 3 Z" fill="#666"/></svg>
<div class="t" style="left:243.00px;top:104.19px;font-size:11px;color:#555;transform:scaleX(0.9021);text-decoration:line-through;">abc</div>
<div class="t" style="left:267.00px;top:103.84px;font-size:12px;color:#444;font-weight:bold;">x</div>
<div class="t" style="left:275.00px;top:110.57px;font-size:7px;color:#2E75B6;font-weight:bold;">2</div>
<div class="t" style="left:289.00px;top:103.84px;font-size:12px;color:#444;font-weight:bold;">x</div>
<div class="t" style="left:297.00px;top:102.57px;font-size:7px;color:#2E75B6;font-weight:bold;">2</div>
<div class="t" style="left:305.00px;top:74.49px;font-size:13px;color:#555;transform:scaleX(1.1532);">A</div>
<svg class="r" style="left:313px;top:72px;" width="6" height="4" viewBox="0 0 6 4"><path d="M0 3.5 H6 L3 0 Z" fill="#2E75B6"/></svg>
<div class="t" style="left:328.00px;top:77.03px;font-size:10px;color:#555;transform:scaleX(1.0494);">A</div>
<svg class="r" style="left:335px;top:72px;" width="6" height="4" viewBox="0 0 6 4"><path d="M0 0 H6 L3 3.5 Z" fill="#2E75B6"/></svg>
<div class="t" style="left:355.00px;top:73.84px;font-size:12px;color:#555;transform:scaleX(1.0219);">Aa</div>
<svg class="r" style="left:375px;top:78px;" width="5" height="3" viewBox="0 0 5 3"><path d="M0 0 H5 L2.5 3 Z" fill="#666"/></svg>
<svg class="r" style="left:397px;top:70px;" width="17" height="17" viewBox="0 0 17 17"><text x="0" y="9" font-size="10" fill="#555" font-family="Liberation Sans">A</text><path d="M6 13 L12 6 L16 9.5 L10 16 Z" fill="#E8848F"/><path d="M5 12 L7 10 L11 14 L9 16 Z" fill="#F0A0A8"/></svg>
<div class="t" style="left:319.50px;top:103.80px;font-size:15px;color:#FFFFFF;font-weight:bold;transform:scaleX(1.1539);-webkit-text-stroke:1.2px #3F7BC8;">A</div>
<svg class="r" style="left:338px;top:109px;" width="5" height="3" viewBox="0 0 5 3"><path d="M0 0 H5 L2.5 3 Z" fill="#666"/></svg>
<div class="t" style="left:351.00px;top:101.73px;font-size:8px;color:#555;font-weight:bold;">ab</div>
<svg class="r" style="left:358px;top:101px;" width="10" height="13" viewBox="0 0 10 13"><path d="M1 12 L8 2 L10 3.5 L3 13 Z" fill="#777"/></svg>
<div class="r" style="left:351px;top:114px;width:16px;height:4px;background:#FFFF00;"></div>
<svg class="r" style="left:373px;top:109px;" width="5" height="3" viewBox="0 0 5 3"><path d="M0 0 H5 L2.5 3 Z" fill="#666"/></svg>
<div class="t" style="left:389.00px;top:102.99px;font-size:13px;color:#555;transform:scaleX(1.0379);">A</div>
<div class="r" style="left:385px;top:114px;width:16px;height:4px;background:#FF0000;"></div>
<svg class="r" style="left:407px;top:109px;" width="5" height="3" viewBox="0 0 5 3"><path d="M0 0 H5 L2.5 3 Z" fill="#666"/></svg>
<svg class="r" style="left:428px;top:70px;" width="16" height="17" viewBox="0 0 16 17"><g fill="#3F7BC8"><circle cx="2.5" cy="2.5" r="1.4"/><circle cx="2.5" cy="8.5" r="1.4"/><circle cx="2.5" cy="14.5" r="1.4"/></g><g stroke="#555" stroke-width="1.1"><path d="M6 2.5H14 M6 8.5H14 M6 14.5H14"/></g></svg>
<svg class="r" style="left:450px;top:78px;" width="5" height="3" viewBox="0 0 5 3"><path d="M0 0 H5 L2.5 3 Z" fill="#333"/></svg>
<svg class="r" style="left:462px;top:70px;" width="16" height="17" viewBox="0 0 16 17"><g fill="#3F7BC8" font-family="Liberation Sans" font-size="6" font-weight="bold"><text x="0" y="5">1</text><text x="0" y="11">2</text><text x="0" y="17">3</text></g><g stroke="#555" stroke-width="1.1"><path d="M5 2.5H15 M5 8.5H15 M5 14.5H15"/></g></svg>
<svg class="r" style="left:484px;top:78px;" width="5" height="3" viewBox="0 0 5 3"><path d="M0 0 H5 L2.5 3 Z" fill="#666"/></svg>
<svg class="r" style="left:496px;top:70px;" width="17" height="17" viewBox="0 0 17 17"><g fill="#3F7BC8" font-family="Liberation Sans" font-size="6" font-weight="bold"><text x="0" y="5">1</text><text x="5" y="11">a</text><text x="9" y="17">i</text></g><g stroke="#555" stroke-width="1.1"><path d="M5 2.5H16 M10 8.5H16 M13 14.5H16"/></g></svg>
<svg class="r" style="left:516px;top:78px;" width="5" height="3" viewBox="0 0 5 3"><path d="M0 0 H5 L2.5 3 Z" fill="#666"/></svg>
<svg class="r" style="left:538px;top:71px;" width="17" height="14" viewBox="0 0 17 14"><g stroke="#555" stroke-width="1.1"><path d="M0 1H17 M8 4H17 M8 7H17 M8 10H17 M0 13H17"/></g><path d="M1 6 L5 3 V9 Z M3 6 H7" fill="#3F7BC8" stroke="#3F7BC8" stroke-width="1.2"/></svg>
<svg class="r" style="left:560px;top:71px;" width="17" height="14" viewBox="0 0 17 14"><g stroke="#555" stroke-width="1.1"><path d="M0 1H17 M8 4H17 M8 7H17 M8 10H17 M0 13H17"/></g><path d="M7 6 L3 3 V9 Z M0 6 H4" fill="#3F7BC8" stroke="#3F7BC8" stroke-width="1.2"/></svg>
<svg class="r" style="left:592px;top:70px;" width="16" height="17" viewBox="0 0 16 17"><text x="0" y="8" font-size="9" font-weight="bold" fill="#3F7BC8" font-family="Liberation Sans">A</text><text x="0.3" y="16" font-size="9" font-weight="bold" fill="#8A46B4" font-family="Liberation Sans">Z</text><path d="M11.5 1 V15.5 M8.8 12.5 L11.5 15.5 L14.2 12.5" fill="none" stroke="#666" stroke-width="1.1"/></svg>
<div class="t" style="left:624.50px;top:69.80px;font-size:15px;color:#6A6A6A;font-weight:bold;transform:scaleX(1.1987);">¶</div>
<svg class="r" style="left:429px;top:104.5px;" width="14" height="11" viewBox="0 0 14 11"><path d="M0 1H14 M0 4H10 M0 7H14 M0 10H10" stroke="#555" stroke-width="1" transform="translate(0,-0.5)"/></svg>
<svg class="r" style="left:451px;top:104.5px;" width="14" height="11" viewBox="0 0 14 11"><path d="M0 1H14 M2 4H12 M0 7H14 M2 10H12" stroke="#555" stroke-width="1" transform="translate(0,-0.5)"/></svg>
<svg class="r" style="left:473px;top:104.5px;" width="14" height="11" viewBox="0 0 14 11"><path d="M0 1H14 M4 4H14 M0 7H14 M4 10H14" stroke="#555" stroke-width="1" transform="translate(0,-0.5)"/></svg>
<svg class="r" style="left:495px;top:104.5px;" width="14" height="11" viewBox="0 0 14 11"><path d="M0 1H14 M0 4H14 M0 7H14 M0 10H14" stroke="#555" stroke-width="1" transform="translate(0,-0.5)"/></svg>
<svg class="r" style="left:525px;top:101px;" width="16" height="17" viewBox="0 0 16 17"><path d="M3 1 V15 M0.5 3.5 L3 1 L5.5 3.5 M0.5 12.5 L3 15 L5.5 12.5" fill="none" stroke="#3F7BC8" stroke-width="1.3"/><path d="M7 3H15 M7 6H15 M7 9H15 M7 12H15" stroke="#555" stroke-width="1.1"/></svg>
<svg class="r" style="left:545px;top:109px;" width="5" height="3" viewBox="0 0 5 3"><path d="M0 0 H5 L2.5 3 Z" fill="#666"/></svg>
<svg class="r" style="left:567px;top:101px;" width="17" height="17" viewBox="0 0 17 17"><path d="M3 8 L8 3 L13 8 L8 13 Z" fill="#fff" stroke="#555" stroke-width="1"/><path d="M8 3 V0.5 H10 V5" fill="none" stroke="#555"/><path d="M13 8 C15 6 15 4 13.5 3" fill="none" stroke="#3F7BC8" stroke-width="1.5"/><rect x="0.5" y="13.5" width="16" height="3" fill="#fff" stroke="#777"/></svg>
<svg class="r" style="left:589px;top:109px;" width="5" height="3" viewBox="0 0 5 3"><path d="M0 0 H5 L2.5 3 Z" fill="#666"/></svg>
<svg class="r" style="left:602px;top:102px;" width="14" height="14" viewBox="0 0 14 14"><g stroke="#777" stroke-width="1" stroke-dasharray="1 1.2" fill="none"><path d="M0.5 0.5H13.5 M0.5 0.5V13 M13.5 0.5V13 M7 0.5V13 M0.5 7H13.5"/></g><path d="M0 13.5H14" stroke="#555" stroke-width="1"/></svg>
<svg class="r" style="left:623px;top:109px;" width="5" height="3" viewBox="0 0 5 3"><path d="M0 0 H5 L2.5 3 Z" fill="#666"/></svg>
<div class="r" style="left:652px;top:64px;width:65px;height:30px;overflow:hidden;">
<div class="t" style="left:6.70px;top:14.99px;font-size:13px;color:#000000;">AaBbCcDd</div>
</div>
<div class="r" style="left:723px;top:64px;width:66px;height:30px;overflow:hidden;">
<div class="t" style="left:7.80px;top:14.99px;font-size:13px;color:#000000;">AaBbCcDd</div>
</div>
<div class="r" style="left:795px;top:64px;width:66px;height:30px;overflow:hidden;">
<div class="t" style="left:7.80px;top:12.86px;font-size:18px;color:#2E74B5;">AaBbCcDd</div>
</div>
<div class="r" style="left:867px;top:64px;width:66px;height:30px;overflow:hidden;">
<div class="t" style="left:8.00px;top:14.55px;font-size:14px;color:#2E74B5;transform:scaleX(0.9530);">AaBbCcDd</div>
</div>
<div class="r" style="left:939px;top:72px;width:64px;height:22px;overflow:hidden;">
<div class="t" style="left:8.00px;top:-6.59px;font-size:32px;color:#000000;transform:scaleX(0.9093);-webkit-text-stroke:0.6px #fff;">AaB</div>
</div>
<div class="r" style="left:1011px;top:64px;width:66px;height:30px;overflow:hidden;">
<div class="t" style="left:8.00px;top:15.42px;font-size:12.5px;color:#5A5A5A;letter-spacing:0.8px;">AaBbCcDd</div>
</div>
<div class="r" style="left:1083px;top:64px;width:66px;height:30px;overflow:hidden;">
<div class="t" style="left:8.00px;top:14.99px;font-size:13px;color:#404040;font-style:italic;">AaBbCcDd</div>
</div>
<div class="r" style="left:1155px;top:64px;width:66.5px;height:30px;overflow:hidden;">
<div class="t" style="left:8.50px;top:14.99px;font-size:13px;color:#000000;font-style:italic;">AaBbCcDd</div>
</div>
<div class="t" style="left:663.50px;top:103.94px;font-size:12px;color:#555555;">¶ Normal</div>
<div class="t" style="left:729.40px;top:103.94px;font-size:12px;color:#555555;transform:scaleX(0.9270);">¶ No Spac...</div>
<div class="t" style="left:805.00px;top:103.94px;font-size:12px;color:#555555;transform:scaleX(0.9687);">Heading 1</div>
<div class="t" style="left:877.60px;top:103.94px;font-size:12px;color:#555555;transform:scaleX(0.9760);">Heading 2</div>
<div class="t" style="left:965.00px;top:103.94px;font-size:12px;color:#555555;transform:scaleX(0.9899);">Title</div>
<div class="t" style="left:1028.00px;top:103.94px;font-size:12px;color:#555555;">Subtitle</div>
<div class="t" style="left:1089.00px;top:103.94px;font-size:12px;color:#555555;transform:scaleX(0.9333);">Subtle Em...</div>
<div class="t" style="left:1167.00px;top:103.94px;font-size:12px;color:#555555;transform:scaleX(0.9300);">Emphasis</div>
<svg class="r" style="left:1233px;top:71px;" width="7" height="4" viewBox="0 0 7 4"><path d="M0 4 H7 L3.5 0 Z" fill="#BDBDBD"/></svg>
<svg class="r" style="left:1233px;top:92px;" width="7" height="4" viewBox="0 0 7 4"><path d="M0 0 H7 L3.5 4 Z" fill="#666"/></svg>
<svg class="r" style="left:1233px;top:109px;" width="7" height="7" viewBox="0 0 7 7"><path d="M0 0.5 H7" stroke="#666"/><path d="M0 3 H7 L3.5 7 Z" fill="#666"/></svg>
<svg class="r" style="left:1240px;top:138px;" width="7" height="7" viewBox="0 0 7 7"><path d="M0.5 6.5 V0.5 H6.5" fill="none" stroke="#888"/><path d="M2.5 2.5 L6.5 6.5 M3.5 6.5 H6.5 V3.5" fill="none" stroke="#888"/></svg>
<svg class="r" style="left:1260px;top:65px;" width="14" height="12" viewBox="0 0 14 12"><circle cx="9" cy="4.5" r="3.6" fill="none" stroke="#3F7BC8" stroke-width="1.6"/><path d="M6.5 7 L1 11.5" stroke="#3F7BC8" stroke-width="2.2"/></svg>
<div class="t" style="left:1278.80px;top:65.84px;font-size:12px;color:#444444;transform:scaleX(0.9424);">Find</div>
<svg class="r" style="left:1311px;top:70px;" width="5" height="3" viewBox="0 0 5 3"><path d="M0 0 H5 L2.5 3 Z" fill="#666"/></svg>
<svg class="r" style="left:1258px;top:86px;" width="17" height="16" viewBox="0 0 17 16"><text x="0.5" y="7" font-size="9" fill="#555" font-family="Liberation Sans">a</text><text x="6" y="7" font-size="9" fill="#8A46B4" font-family="Liberation Sans">b</text><text x="5" y="15.5" font-size="10" fill="#555" font-family="Liberation Sans">a</text><text x="11" y="15.5" font-size="10" fill="#3F7BC8" font-family="Liberation Sans">c</text><path d="M2 9 V13 H4.5 M3.3 11.8 L4.5 13 L3.3 14.2" fill="none" stroke="#3F7BC8"/></svg>
<div class="t" style="left:1278.80px;top:89.34px;font-size:12px;color:#444444;transform:scaleX(0.9130);">Replace</div>
<svg class="r" style="left:1262px;top:109px;" width="11" height="15" viewBox="0 0 11 15"><path d="M0.5 0.5 V12.5 L3.5 9.5 L6 14.5 L8 13.5 L5.5 8.8 H10 Z" fill="#F1F1F1" stroke="#555"/></svg>
<div class="t" style="left:1278.00px;top:112.34px;font-size:12px;color:#444444;transform:scaleX(0.9145);">Select</div>
<svg class="r" style="left:1312px;top:116px;" width="5" height="3" viewBox="0 0 5 3"><path d="M0 0 H5 L2.5 3 Z" fill="#666"/></svg>
<svg class="r" style="left:1347px;top:138px;" width="10" height="6" viewBox="0 0 10 6"><path d="M0.8 5.2 L5 1 L9.2 5.2" fill="none" stroke="#666" stroke-width="1.5"/></svg>
<svg class="r" style="left:151px;top:139px;" width="14" height="14" viewBox="0 0 14 14"><rect x="0" y="0" width="14" height="14" rx="1" fill="#FFFFFF"/><rect x="2" y="2" width="10" height="5" fill="#217346"/><rect x="3" y="9.5" width="8" height="4.5" fill="#217346"/><rect x="5.5" y="11" width="2" height="3" fill="#FFFFFF"/></svg>
<svg class="r" style="left:194px;top:139px;" width="15" height="14" viewBox="0 0 15 14"><g fill="none" stroke="#FFFFFF" stroke-width="1.9" opacity="1"><path d="M2.5 5 H8.3 A4.1 4.1 0 0 1 8.3 13.1 H7.5"/><path d="M6 1 L2 5 L6 9"/></g></svg>
<svg class="r" style="left:217px;top:144px;" width="5" height="3" viewBox="0 0 5 3"><path d="M0 0 H5 L2.5 3 Z" fill="#FFFFFF"/></svg>
<svg class="r" style="left:237px;top:139px;" width="15" height="14" viewBox="0 0 15 14"><g fill="none" stroke="#4F9A6C" stroke-width="1.9"><path d="M12.5 5 H6.7 A4.1 4.1 0 0 0 6.7 13.1 H7.5"/><path d="M9 1 L13 5 L9 9"/></g></svg>
<svg class="r" style="left:261px;top:144px;" width="5" height="3" viewBox="0 0 5 3"><path d="M0 0 H5 L2.5 3 Z" fill="#4F9A6C"/></svg>
<svg class="r" style="left:289px;top:142px;" width="7" height="8" viewBox="0 0 7 8"><rect x="0.5" y="0" width="6" height="1.3" fill="#FFFFFF"/><path d="M0 3 H7 L3.5 7 Z" fill="#FFFFFF"/></svg>
<svg class="r" style="left:921px;top:141px;" width="14" height="11" viewBox="0 0 14 11"><rect x="0.5" y="0.5" width="13" height="10" fill="none" stroke="#fff"/><path d="M1 2.5H13" stroke="#fff"/><path d="M7 9.5V4.5 M4.8 6.7 L7 4.5 L9.2 6.7" fill="none" stroke="#fff" stroke-width="1.3"/></svg>
<div class="r" style="left:969px;top:147px;width:9px;height:2px;background:#FFFFFF;"></div>
<svg class="r" style="left:1015px;top:141px;" width="11" height="11" viewBox="0 0 11 11"><rect x="1" y="1" width="9" height="9" fill="none" stroke="#fff" stroke-width="1.2"/><path d="M1 1.8H10" stroke="#fff" stroke-width="1.8"/></svg>
<svg class="r" style="left:1061px;top:141px;" width="11" height="11" viewBox="0 0 11 11"><path d="M0.8 0.8L10.2 10.2M10.2 0.8L0.8 10.2" stroke="#fff" stroke-width="1.8"/></svg>
<svg class="r" style="left:673px;top:168px;" width="11" height="15" viewBox="0 0 11 15"><g fill="none" stroke="#C2DCC9" stroke-width="1.2"><path d="M3 11 V9.5 C3 8 0.8 6.8 0.8 4.6 A4.7 4.7 0 0 1 10.2 4.6 C10.2 6.8 8 8 8 9.5 V11 Z"/><path d="M3.5 13 H7.5"/></g></svg>
<svg class="r" style="left:1022px;top:168px;" width="16" height="17" viewBox="0 0 16 17"><g fill="none" stroke="#FFFFFF" stroke-width="1.4"><circle cx="7" cy="5" r="4"/><path d="M0.8 16 C1.5 11.5 4 9.5 7 9.5 C8.5 9.5 9.5 10 10.5 10.5"/><path d="M12 10.5 V16.5 M9 13.5 H15"/></g></svg>
<div class="r" style="left:149px;top:192px;width:30px;height:30px;background:#FAFAFA;border:1px solid #C6C6C6;box-sizing:border-box;"></div>
<svg class="r" style="left:159px;top:200px;" width="15" height="16" viewBox="0 0 15 16"><path d="M0.5 0.5 H7 L9.5 3 V13.5 H0.5 Z" fill="#fff" stroke="#666"/><path d="M2 5H7 M2 7H7 M2 9H6 M2 11H6" stroke="#888"/><path d="M6 8.5 V14 A4 1.6 0 0 0 14 14 V8.5 Z" fill="#E8B964"/><ellipse cx="10" cy="8.5" rx="4" ry="1.6" fill="#F2CE8E"/></svg>
<svg class="r" style="left:176px;top:250px;" width="5" height="3" viewBox="0 0 5 3"><path d="M0 0 H5 L2.5 3 Z" fill="#666"/></svg>
<svg class="r" style="left:217px;top:194px;" width="33" height="33" viewBox="0 0 33 33"><path d="M11 0 H5.5 L0 11.5 H4.5 L1.5 19 L9.5 8 H5.5 Z" fill="#E8B964"/><path d="M8.5 6.5 V23.5 A7 2.6 0 0 0 22.5 23.5 V6.5 Z" fill="#777"/><ellipse cx="15.5" cy="6.5" rx="7" ry="2.6" fill="#8a8a8a" stroke="#F1F1F1" stroke-width="0.8"/><rect x="12.5" y="17.5" width="18" height="14" fill="#fff" stroke="#777"/><rect x="12" y="17" width="19" height="3" fill="#3F7BC8"/><path d="M13 24H30 M13 27.5H30 M18.5 20V31 M24.5 20V31" stroke="#888"/></svg>
<svg class="r" style="left:248px;top:253px;" width="5" height="3" viewBox="0 0 5 3"><path d="M0 0 H5 L2.5 3 Z" fill="#666"/></svg>
<svg class="r" style="left:259px;top:193px;" width="17" height="16" viewBox="0 0 17 16"><rect x="0.5" y="1.5" width="15" height="13" fill="#fff" stroke="#777"/><rect x="0" y="1" width="16" height="2.5" fill="#3F7BC8"/><path d="M7 5.5H14.5" stroke="#999" stroke-dasharray="1 1"/><path d="M10.5 3.5V14.5" stroke="#999"/><path d="M12 8H14 M12 10.5H14 M12 13H14" stroke="#888"/></svg>
<svg class="r" style="left:259px;top:217px;" width="17" height="16" viewBox="0 0 17 16"><rect x="0.5" y="1.5" width="15" height="13" fill="#fff" stroke="#777"/><rect x="0" y="1" width="16" height="2.5" fill="#3F7BC8"/><path d="M2 2.2H3.5 M7 2.2H8.5 M12 2.2H13.5" stroke="#fff"/><path d="M0.5 6.5H15.5 M0.5 9.5H15.5 M0.5 12H15.5 M5.5 3.5V14.5 M10.5 3.5V14.5" stroke="#888"/></svg>
<svg class="r" style="left:259px;top:240px;" width="17" height="17" viewBox="0 0 17 17"><path d="M0.5 0.5 H7 L10.5 4 V14.5 H0.5 Z" fill="#fff" stroke="#666"/><circle cx="11.5" cy="11.5" r="4.5" fill="#fff" stroke="#3F7BC8" stroke-width="1.2"/><path d="M11.5 9 V11.8 H13.5" fill="none" stroke="#3F7BC8"/></svg>
<svg class="r" style="left:303px;top:196px;" width="30" height="30" viewBox="0 0 30 30"><path d="M0.5 0.5 H9.5 V23.5 H0.5 Z" fill="#fff" stroke="#777"/><path d="M3 2.5 H11.5 V25.5 H3 Z" fill="#fff" stroke="#777"/><path d="M5.5 4.5 H17 L21.5 9 V27.5 H5.5 Z" fill="#fff" stroke="#777"/><path d="M17 4.5 V9 H21.5" fill="none" stroke="#777"/><circle cx="22" cy="22" r="7.5" fill="#F1F1F1"/><path d="M16.6 20.5 A5.6 5.6 0 0 1 26.5 18.2" fill="none" stroke="#5A9E7E" stroke-width="2.4"/><path d="M27.4 23.5 A5.6 5.6 0 0 1 17.5 25.8" fill="none" stroke="#5A9E7E" stroke-width="2.4"/><path d="M24.5 15.5 L29 15.5 L28.5 20.5 Z" fill="#5A9E7E"/><path d="M19.5 28.5 L15 28.5 L15.5 23.5 Z" fill="#5A9E7E"/></svg>
<svg class="r" style="left:322px;top:252px;" width="5" height="3" viewBox="0 0 5 3"><path d="M0 0 H5 L2.5 3 Z" fill="#666"/></svg>
<svg class="r" style="left:341px;top:195px;" width="16" height="14" viewBox="0 0 16 14"><rect x="0.5" y="0.5" width="14" height="10" fill="#fff" stroke="#666"/><path d="M2 12.5 H13.5" stroke="#666"/><path d="M7.5 3 L10 5.5 L7.5 8 L5 5.5 Z" fill="none" stroke="#3F7BC8" stroke-width="1.3"/></svg>
<svg class="r" style="left:342px;top:217px;" width="15" height="16" viewBox="0 0 15 16"><rect x="0.5" y="0.5" width="13.5" height="15" fill="#F5F0F5" stroke="#BBB"/><path d="M0.5 2.5H14" stroke="#BBB" stroke-width="2"/><circle cx="3.5" cy="7" r="1" fill="#BBB"/><circle cx="3.5" cy="11.5" r="1" fill="#BBB"/><path d="M6 7H12 M6 11.5H12" stroke="#BBB"/></svg>
<svg class="r" style="left:344px;top:241px;" width="14" height="16" viewBox="0 0 14 16"><path d="M0.5 0.5 H7 L10.5 4 V14.5 H0.5 Z" fill="#F5F0F5" stroke="#BBB"/><g fill="none" stroke="#BBB" stroke-width="1.2"><rect x="3" y="10.5" width="5.5" height="3.5" rx="1.7"/><rect x="7" y="11.5" width="5.5" height="3.5" rx="1.7"/></g></svg>
<svg class="r" style="left:447px;top:201px;" width="15" height="17" viewBox="0 0 15 17"><text x="0" y="7.5" font-size="9.5" fill="#3F7BC8" font-family="Liberation Sans">A</text><text x="0.3" y="16" font-size="9.5" fill="#8A46B4" font-family="Liberation Sans">Z</text><path d="M11.5 1 V15.5 M9 12.5 L11.5 15.5 L14 12.5" fill="none" stroke="#555" stroke-width="1.1"/></svg>
<svg class="r" style="left:447px;top:232px;" width="15" height="17" viewBox="0 0 15 17"><text x="0" y="7.5" font-size="9.5" fill="#8A46B4" font-family="Liberation Sans">Z</text><text x="0.3" y="16" font-size="9.5" fill="#3F7BC8" font-family="Liberation Sans">A</text><path d="M11.5 1 V15.5 M9 12.5 L11.5 15.5 L14 12.5" fill="none" stroke="#555" stroke-width="1.1"/></svg>
<svg class="r" style="left:471px;top:197px;" width="30" height="26" viewBox="0 0 30 26"><rect x="0.5" y="0.5" width="28.5" height="24.5" rx="1" fill="#fff" stroke="#777"/><rect x="0" y="0" width="29.5" height="4" fill="#3F7BC8"/><path d="M14.5 4 V25" stroke="#777"/><g font-family="Liberation Sans" font-size="9.5"><text x="3" y="13" fill="#8A46B4">Z</text><text x="3" y="23" fill="#3F7BC8">A</text><text x="17" y="13" fill="#3F7BC8">A</text><text x="17.5" y="23" fill="#8A46B4">Z</text></g></svg>
<svg class="r" style="left:523px;top:196px;" width="28" height="28" viewBox="0 0 28 28"><path d="M0 0 H27 L15.5 12 V27 H11 V12 Z" fill="#777"/><path d="M2 1 L12.5 12 V26" fill="none" stroke="#fff" stroke-width="1"/></svg>
<svg class="r" style="left:561px;top:193px;" width="16" height="18" viewBox="0 0 16 18"><path d="M0 0 H13 L8 5.5 V13 H5 V5.5 Z" fill="#B8B8B8"/><path d="M8 10 L14 16 M14 10 L8 16" stroke="#B8B8B8" stroke-width="1.6"/></svg>
<svg class="r" style="left:561px;top:217px;" width="16" height="18" viewBox="0 0 16 18"><path d="M0 0 H13 L8 5.5 V13 H5 V5.5 Z" fill="#B8B8B8"/><path d="M8 12 A3.5 3.5 0 0 1 14.5 11 M14.5 14 A3.5 3.5 0 0 1 8 15" fill="none" stroke="#B8B8B8" stroke-width="1.3"/></svg>
<svg class="r" style="left:561px;top:240px;" width="16" height="17" viewBox="0 0 16 17"><path d="M0 0 H13 L8 5.5 V13 H5 V5.5 Z" fill="#666"/><path d="M7 16.5 L8 13 L14 7 L16 9 L10 15 Z" fill="#3F7BC8"/></svg>
<svg class="r" style="left:660px;top:195px;" width="31" height="27" viewBox="0 0 31 27"><path d="M9.5 5 A6 6 0 0 1 21 6" fill="none" stroke="#3F7BC8" stroke-width="2"/><path d="M18 5 L24.5 5.5 L21.5 11 Z" fill="#3F7BC8"/><rect x="0.5" y="10" width="15" height="16" fill="#fff" stroke="#666"/><path d="M3 14.5H13 M3 17.5H13 M3 20.5H13 M3 23.5H13" stroke="#3F7BC8"/><rect x="17.5" y="13.5" width="12.5" height="11" fill="#fff" stroke="#666"/><path d="M17.5 15H30" stroke="#666" stroke-width="2.5"/><path d="M19.5 19H22.5 M24.5 19H28 M19.5 22H22.5 M24.5 22H28" stroke="#3F7BC8"/></svg>
<svg class="r" style="left:705px;top:194px;" width="16" height="16" viewBox="0 0 16 16"><rect x="0.5" y="0.5" width="13" height="11" fill="#fff" stroke="#777"/><path d="M0.5 3H13.5 M0.5 9H13.5" stroke="#888"/><rect x="3.5" y="4.5" width="7" height="3" fill="none" stroke="#5FA07A"/><path d="M12 7 L9 12 H11.5 L10 16 L15 10 H12.5 L14 7 Z" fill="#E8B964"/></svg>
<svg class="r" style="left:705px;top:217px;" width="17" height="16" viewBox="0 0 17 16"><rect x="0.5" y="0.5" width="4" height="14" fill="#fff" stroke="#555"/><rect x="1" y="4" width="3" height="3" fill="#E8B964"/><rect x="1" y="10" width="3" height="3" fill="#E8B964"/><rect x="11.5" y="0.5" width="4" height="14" fill="#fff" stroke="#555"/><rect x="12" y="4" width="3" height="3" fill="#E8B964"/><path d="M6 7.5H10 M8.3 5.8L10 7.5L8.3 9.2" fill="none" stroke="#3F7BC8"/></svg>
<svg class="r" style="left:705px;top:240px;" width="17" height="17" viewBox="0 0 17 17"><rect x="0.5" y="3.5" width="10" height="4" fill="#fff" stroke="#777"/><rect x="0.5" y="10.5" width="10" height="4" fill="#fff" stroke="#777"/><path d="M8 4 L10.5 6.5 L15.5 0.5" fill="none" stroke="#5FA07A" stroke-width="1.5"/><circle cx="12.5" cy="13" r="3.2" fill="#fff" stroke="#E05A40" stroke-width="1.3"/><path d="M10.5 11 L14.5 15" stroke="#E05A40" stroke-width="1.2"/></svg>
<svg class="r" style="left:727px;top:247px;" width="5" height="3" viewBox="0 0 5 3"><path d="M0 0 H5 L2.5 3 Z" fill="#666"/></svg>
<svg class="r" style="left:740px;top:194px;" width="17" height="14" viewBox="0 0 17 14"><rect x="0.5" y="0.5" width="4" height="13" fill="#fff" stroke="#555"/><path d="M0.5 4.5H4.5 M0.5 9H4.5" stroke="#555"/><path d="M6 7H10 M8.3 5.3L10 7L8.3 8.7" fill="none" stroke="#3F7BC8"/><rect x="11.5" y="4.5" width="5" height="5" fill="#fff" stroke="#E05A40"/></svg>
<svg class="r" style="left:740px;top:217px;" width="16" height="16" viewBox="0 0 16 16"><g fill="#fff" stroke="#BBB"><rect x="0.5" y="5.5" width="5" height="5"/><rect x="10.5" y="0.5" width="5" height="5"/><rect x="10.5" y="10.5" width="5" height="5"/></g><path d="M5.5 8 L10.5 3 M5.5 8 L10.5 13" stroke="#BBB"/></svg>
<svg class="r" style="left:740px;top:240px;" width="16" height="17" viewBox="0 0 16 17"><path d="M1.5 13.5 V4 C1.5 1.2 13.5 0.8 13.5 3.5" fill="none" stroke="#6CB52D" stroke-width="2"/><path d="M4 6.5 C4 4.5 15.5 4.5 15.5 6.5 V14.5 C15.5 16.5 4 16.5 4 14.5 Z" fill="#6CB52D"/><path d="M10 6.5V15.5 M13 6.5V15.5 M10 9.5H15 M10 12.5H15" stroke="#fff" stroke-width="0.9"/><path d="M6.5 8.5 L7.5 10 L6.5 11.5 M5.5 13 L6.8 14 M7.8 10.5 L9 11" stroke="#fff" stroke-width="1"/></svg>
<svg class="r" style="left:783px;top:197px;" width="30" height="30" viewBox="0 0 30 30"><rect x="0.5" y="0.5" width="25" height="24" fill="#fff" stroke="#777"/><path d="M0.5 6.5H25.5 M0.5 12.5H25.5 M0.5 18.5H25.5 M6.5 0.5V24.5 M12.5 0.5V24.5 M18.5 0.5V24.5" stroke="#BBB"/><rect x="8" y="5.5" width="5" height="5" fill="#fff" stroke="#ED7D31"/><rect x="8" y="15.5" width="5" height="5" fill="#fff" stroke="#ED7D31"/><path d="M17 12 C17 7.5 27 7.5 27 12 C27 15 22.5 15.5 22.5 19" fill="none" stroke="#3F7BC8" stroke-width="3"/><circle cx="22.5" cy="24.5" r="1.8" fill="#3F7BC8"/></svg>
<svg class="r" style="left:816px;top:253px;" width="5" height="3" viewBox="0 0 5 3"><path d="M0 0 H5 L2.5 3 Z" fill="#666"/></svg>
<svg class="r" style="left:834px;top:197px;" width="29" height="26" viewBox="0 0 29 26"><rect x="0.5" y="0.5" width="27" height="20" fill="#fff" stroke="#777"/><path d="M0.5 6.5H27.5 M0.5 13.5H27.5 M7.5 0.5V20.5 M14.5 0.5V20.5 M21.5 0.5V20.5" stroke="#BBB"/><path d="M1.5 21 L3 25 H12 L11 21 M13 21 L14.5 25 H23.5 L22.5 21" fill="#fff" stroke="#777"/><path d="M2 17 L8 11 L11 14 L15 9" fill="none" stroke="#3F7BC8" stroke-width="1.6"/><path d="M15 9 L20 12 L25 5" fill="none" stroke="#E05A40" stroke-width="1.6"/><path d="M22 4 L26.5 2.5 L26 7 Z" fill="#E05A40"/></svg>
<div class="r" style="left:885px;top:192px;width:30px;height:30px;background:#FAFAFA;border:1px solid #C6C6C6;box-sizing:border-box;"></div>
<svg class="r" style="left:893px;top:200px;" width="15" height="14" viewBox="0 0 15 14"><rect x="0.5" y="4.5" width="5" height="5" fill="#fff" stroke="#666"/><path d="M1.8 7H4.2 M3 5.8V8.2" stroke="#666"/><path d="M7.5 0.5 V13.5 H14.5 V0.5 Z" fill="#fff" stroke="#666"/><path d="M9 3H13 M9 6.5H13 M9 10H13" stroke="#3F7BC8" stroke-width="1.3"/></svg>
<svg class="r" style="left:898px;top:249px;" width="5" height="3" viewBox="0 0 5 3"><path d="M0 0 H5 L2.5 3 Z" fill="#666"/></svg>
<svg class="r" style="left:931px;top:195px;" width="17" height="16" viewBox="0 0 17 16"><rect x="0.5" y="0.5" width="13" height="12" fill="#fff" stroke="#999"/><path d="M0.5 4.5H13.5 M0.5 8.5H13.5 M4.5 0.5V12.5 M9 0.5V12.5" stroke="#BBB"/><rect x="6.5" y="6.5" width="10" height="9" fill="#fff" stroke="#999"/><path d="M6.5 8H16.5" stroke="#3F7BC8" stroke-width="2.5"/></svg>
<svg class="r" style="left:1070px;top:269px;" width="10" height="7" viewBox="0 0 10 7"><path d="M0.8 5.8 L5 1.5 L9.2 5.8" fill="none" stroke="#666" stroke-width="1.5"/></svg>
<svg class="r" style="left:224px;top:301px;" width="7" height="4" viewBox="0 0 7 4"><path d="M0 0 H7 L3.5 4 Z" fill="#777"/></svg>
<div class="r" style="left:252px;top:299px;width:2px;height:2px;background:#999;"></div>
<div class="r" style="left:252px;top:303px;width:2px;height:2px;background:#999;"></div>
<div class="r" style="left:252px;top:307px;width:2px;height:2px;background:#999;"></div>
<svg class="r" style="left:281px;top:298px;" width="12" height="12" viewBox="0 0 12 12"><path d="M1 1 L11 11 M11 1 L1 11" stroke="#BDBDBD" stroke-width="1.3"/></svg>
<svg class="r" style="left:316px;top:298px;" width="15" height="12" viewBox="0 0 15 12"><path d="M1 6 L5.5 10.5 L14 1.5" fill="none" stroke="#BDBDBD" stroke-width="1.6"/></svg>
<div class="t" style="left:352.70px;top:299.34px;font-size:12px;color:#555;font-style:italic;font-family:"Liberation Serif",serif;font-weight:bold;">f</div>
<div class="t" style="left:358.00px;top:301.88px;font-size:9px;color:#555;font-style:italic;font-family:"Liberation Serif",serif;font-weight:bold;">x</div>
<svg class="r" style="left:1071px;top:300px;" width="9" height="6" viewBox="0 0 9 6"><path d="M1 1 L4.5 4.5 L8 1" fill="none" stroke="#666" stroke-width="1.6"/></svg>
<svg class="r" style="left:144px;top:331px;" width="9" height="9" viewBox="0 0 9 9"><path d="M9 0 V9 H0 Z" fill="#BDBDBD"/></svg>
<svg class="r" style="left:1075px;top:333px;" width="8" height="5" viewBox="0 0 8 5"><path d="M0 5 H8 L4 0.5 Z" fill="#777"/></svg>
<svg class="r" style="left:1075px;top:596px;" width="8" height="5" viewBox="0 0 8 5"><path d="M0 0 H8 L4 4.5 Z" fill="#777"/></svg>
<svg class="r" style="left:727px;top:614px;" width="5" height="8" viewBox="0 0 5 8"><path d="M5 0 V8 L0.5 4 Z" fill="#777"/></svg>
<svg class="r" style="left:1059px;top:614px;" width="5" height="8" viewBox="0 0 5 8"><path d="M0 0 V8 L4.5 4 Z" fill="#777"/></svg>
<div class="r" style="left:706px;top:613px;width:2px;height:2px;background:#999;"></div>
<div class="r" style="left:706px;top:617px;width:2px;height:2px;background:#999;"></div>
<div class="r" style="left:706px;top:621px;width:2px;height:2px;background:#999;"></div>
<svg class="r" style="left:158px;top:614px;" width="5" height="8" viewBox="0 0 5 8"><path d="M5 0 V8 L0.5 4 Z" fill="#BDBDBD"/></svg>
<svg class="r" style="left:187px;top:614px;" width="5" height="8" viewBox="0 0 5 8"><path d="M0 0 V8 L4.5 4 Z" fill="#BDBDBD"/></svg>
<svg class="r" style="left:329px;top:610px;" width="16" height="16" viewBox="0 0 16 16"><circle cx="8" cy="8" r="7.2" fill="none" stroke="#777" stroke-width="1.1"/><path d="M8 4 V12 M4 8 H12" stroke="#666" stroke-width="1.6"/></svg>
<svg class="r" style="left:804px;top:636px;" width="14" height="14" viewBox="0 0 14 14"><path d="M0.5 0.5 H13.5 V13.5 H0.5 Z M0.5 4.8 H13.5 M0.5 9.2 H13.5 M4.8 0.5 V13.5 M9.2 0.5 V13.5" fill="none" stroke="#777" stroke-width="1.1"/></svg>
<svg class="r" style="left:842px;top:636px;" width="14" height="14" viewBox="0 0 14 14"><rect x="0.5" y="0.5" width="13" height="13" fill="none" stroke="#777"/><rect x="3.5" y="3.5" width="7" height="7" fill="none" stroke="#777"/><path d="M5 5.5H9 M5 7H9 M5 8.5H9" stroke="#777" stroke-width="0.8"/></svg>
<svg class="r" style="left:880px;top:636px;" width="14" height="14" viewBox="0 0 14 14"><path d="M0.5 0.5 H13.5 V13.5 H0.5 Z M0.5 8.5 H6.5 V0.5 M6.5 8.5 H13.5 M9.5 0.5 V5.5" fill="none" stroke="#777"/></svg>
<div class="r" style="left:971px;top:640px;width:1px;height:5px;background:#A0A0A0;"></div>
<svg class="r" style="left:161px;top:709px;" width="17" height="16" viewBox="0 0 17 16"><g fill="none" stroke="#666" stroke-width="1.2"><path d="M6.5 1.5 H1.5 V11.5 H6.5 L7.5 12.5 L8.5 11.5 H13.5 M13.5 3 V1.5 H8.5 L7.5 2.5 L6.5 1.5 M7.5 2.5 V14"/><path d="M10.3 5 L14.2 9.6 M14.2 5 L10.3 9.6" stroke-width="1.7"/></g></svg>
<svg class="r" style="left:1085px;top:710px;" width="15" height="13" viewBox="0 0 15 13"><path d="M0.5 0.5 H6.5 L7.5 1.5 L8.5 0.5 H14.5 V11.5 H8.5 L7.5 12.5 L6.5 11.5 H0.5 Z" fill="none" stroke="#777"/><path d="M7.5 1.5V12 M2 3.5H5.5 M2 5.5H5.5 M2 7.5H5.5 M2 9.5H5.5 M9.5 3.5H13 M9.5 5.5H13 M9.5 7.5H13 M9.5 9.5H13" stroke="#888"/></svg>
<svg class="r" style="left:1124px;top:710px;" width="14" height="13" viewBox="0 0 14 13"><rect x="0.5" y="0.5" width="13" height="12" fill="none" stroke="#777"/><path d="M2.5 3H11.5 M2.5 5.5H11.5 M2.5 8H11.5 M2.5 10.5H11.5" stroke="#777"/></svg>
<svg class="r" style="left:1162px;top:710px;" width="15" height="14" viewBox="0 0 15 14"><path d="M0.5 0.5 H9.5 V6 M0.5 0.5 V11.5 H6" fill="none" stroke="#777"/><path d="M2.5 3H8 M2.5 5.5H8 M2.5 8H5" stroke="#777"/><circle cx="10.5" cy="9.5" r="4" fill="#888"/><path d="M8 8 C9.5 7 11 9 13 8 M9.5 12 C10 10.5 11 11 12 12.5" stroke="#ddd" stroke-width="0.8" fill="none"/></svg>
<svg class="r" style="left:16px;top:739px;" width="17" height="18" viewBox="0 0 17 18"><path d="M0 2.5 L7.3 1.5 V8.3 H0 Z M8.3 1.3 L17 0 V8.3 H8.3 Z M0 9.3 H7.3 V16 L0 15 Z M8.3 9.3 H17 V17.5 L8.3 16.3 Z" fill="#fff"/></svg>
<svg class="r" style="left:406px;top:741px;" width="21" height="15" viewBox="0 0 21 15"><rect x="5.5" y="0.5" width="10" height="14" fill="none" stroke="#fff" stroke-width="1.2"/><path d="M3 2.5 H0.8 V12.5 H3 M18 2.5 H20.2 V12.5 H18" fill="none" stroke="#fff" stroke-width="1.2"/></svg>
<svg class="r" style="left:454px;top:736px;" width="24" height="23" viewBox="0 0 24 23"><rect x="10" y="3" width="13.5" height="17" fill="#fff" stroke="#1D6F42" stroke-width="0.6"/><path d="M11 7H23 M11 10H23 M11 13H23 M11 16H23 M16 4V19.5" stroke="#1D6F42" stroke-width="0.9"/><path d="M0 2.5 L13 0 V23 L0 20.5 Z" fill="#1D6F42"/><path d="M3.3 7 H5.6 L6.8 9.8 L8 7 H10.2 L8 11.5 L10.3 16 H8 L6.8 13.2 L5.5 16 H3.3 L5.6 11.5 Z" fill="#fff"/></svg>
<svg class="r" style="left:504px;top:737px;" width="22" height="22" viewBox="0 0 22 22"><circle cx="11" cy="11" r="11" fill="#DB4437"/><path d="M11 11 L1.47 5.5 A11 11 0 0 0 11 22 Z" fill="#0F9D58"/><path d="M11 11 L11 22 A11 11 0 0 0 20.53 5.5 L11 5.5 Z" fill="#FFCD40"/><circle cx="11" cy="11" r="5" fill="#fff"/><circle cx="11" cy="11" r="4" fill="#4285F4"/></svg>
<svg class="r" style="left:553px;top:736px;" width="23" height="23" viewBox="0 0 23 23"><rect x="9.5" y="3" width="13.5" height="17" fill="#fff" stroke="#2B579A" stroke-width="0.6"/><path d="M12 6.5H21.5 M12 9H21.5 M12 11.5H21.5 M12 14H21.5 M12 16.5H21.5" stroke="#2B579A" stroke-width="0.9"/><path d="M0 2.5 L13 0 V23 L0 20.5 Z" fill="#2B579A"/><path d="M1.8 7.5 H3.8 L4.8 13 L6 7.5 H7.6 L8.8 13 L9.8 7.5 H11.6 L9.8 16 H8 L6.8 10.8 L5.6 16 H3.8 Z" fill="#fff"/></svg>
<div class="r" style="left:584px;top:766px;width:1px;height:2px;background:#020308;"></div>
<div class="r" style="left:575px;top:766px;width:9px;height:2px;background:#4D7FAE;"></div>
<svg class="r" style="left:1177px;top:744px;" width="13" height="8" viewBox="0 0 13 8"><path d="M0.7 7.3 L6.5 1 L12.3 7.3" fill="none" stroke="#fff" stroke-width="1.1"/></svg>
<svg class="r" style="left:1199px;top:742px;" width="17" height="12" viewBox="0 0 17 12"><path d="M1 1 V4 M4 1 V4 M0 4 H5 V6 C5 7.5 2.5 8 2.5 8 V11" fill="none" stroke="#fff" stroke-width="1"/><rect x="4.5" y="3.5" width="11" height="6.5" fill="none" stroke="#fff"/><rect x="6" y="5" width="8" height="3.5" fill="#fff"/><rect x="15.5" y="5.5" width="1.5" height="3" fill="#fff"/></svg>
<svg class="r" style="left:1226px;top:743px;" width="13" height="12" viewBox="0 0 13 12"><g fill="none" stroke="#fff" stroke-width="1"><path d="M0.5 11.5 A11 11 0 0 1 11.5 0.5"/><path d="M2.8 11.5 A8.7 8.7 0 0 1 11.5 2.8"/><path d="M5.1 11.5 A6.4 6.4 0 0 1 11.5 5.1"/><path d="M7.4 11.5 A4.1 4.1 0 0 1 11.5 7.4"/></g><rect x="9" y="9" width="3.5" height="3" fill="#fff"/></svg>
<svg class="r" style="left:1247px;top:741px;" width="17" height="13" viewBox="0 0 17 13"><path d="M0.5 4 H3.5 L8 0.5 V12.5 L3.5 9 H0.5 Z" fill="none" stroke="#fff"/><g fill="none" stroke="#ccc" stroke-width="0.9"><path d="M10.5 4 A3 3 0 0 1 10.5 9"/><path d="M12.5 2.5 A5 5 0 0 1 12.5 10.5"/><path d="M14.5 1 A7 7 0 0 1 14.5 12"/></g></svg>
<svg class="r" style="left:1271px;top:740px;" width="17" height="17" viewBox="0 0 17 17"><path d="M0.5 0.5 H15.5 V12.5 H10 L8 15 L6 12.5 H0.5 Z" fill="none" stroke="#fff"/><path d="M3 3.5H13 M3 6H13 M3 8.5H10" stroke="#fff"/></svg>
</div></body></html>
